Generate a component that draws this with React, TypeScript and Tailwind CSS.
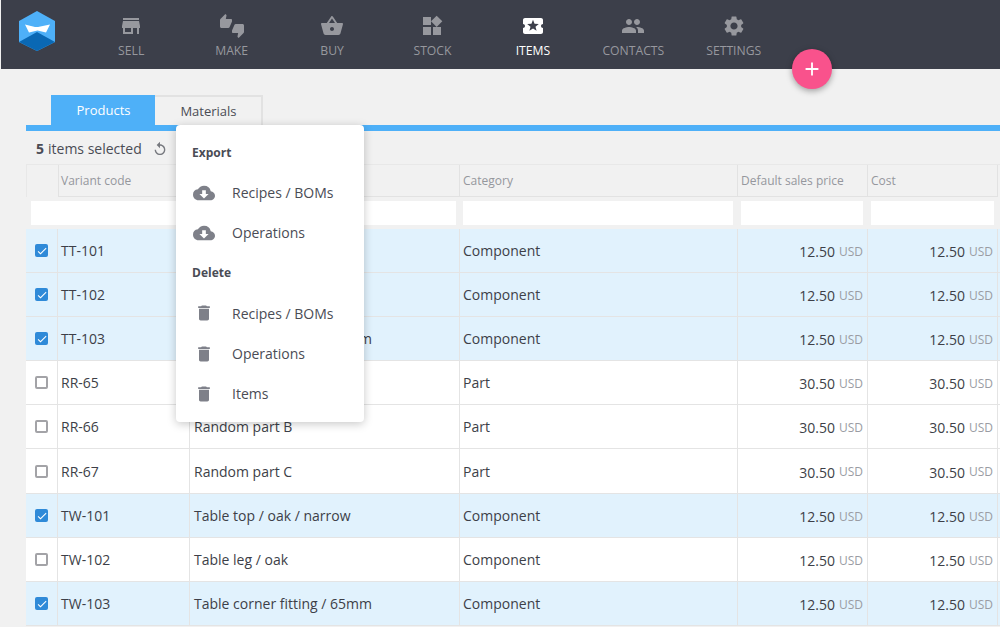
import {
  MdStore,
  MdThumbsUpDown,
  MdShoppingBasket,
  MdWidgets,
  MdLocalActivity,
  MdPeople,
  MdSettings,
  MdCloudDownload,
  MdDelete,
  MdReplay,
  MdCheck,
  MdAdd,
} from "react-icons/md";

const nav = [
  { label: "SELL", icon: MdStore },
  { label: "MAKE", icon: MdThumbsUpDown },
  { label: "BUY", icon: MdShoppingBasket },
  { label: "STOCK", icon: MdWidgets },
  { label: "ITEMS", icon: MdLocalActivity, active: true },
  { label: "CONTACTS", icon: MdPeople },
  { label: "SETTINGS", icon: MdSettings },
];

const rows = [
  { code: "TT-101", name: "Table top", category: "Component", price: "12.50", checked: true, h: "h-[44px]" },
  { code: "TT-102", name: "Table leg", category: "Component", price: "12.50", checked: true, h: "h-[44px]" },
  { code: "TT-103", name: "Table corner fitting / 65mm", category: "Component", price: "12.50", checked: true, h: "h-[44px]" },
  { code: "RR-65", name: "Random part A", category: "Part", price: "30.50", checked: false, h: "h-[44px]" },
  { code: "RR-66", name: "Random part B", category: "Part", price: "30.50", checked: false, h: "h-[44px]" },
  { code: "RR-67", name: "Random part C", category: "Part", price: "30.50", checked: false, h: "h-[45px]" },
  { code: "TW-101", name: "Table top / oak / narrow", category: "Component", price: "12.50", checked: true, h: "h-[44px]" },
  { code: "TW-102", name: "Table leg / oak", category: "Component", price: "12.50", checked: false, h: "h-[44px]" },
  { code: "TW-103", name: "Table corner fitting / 65mm", category: "Component", price: "12.50", checked: true, h: "h-[44px]" },
];

const gridCols = "grid grid-cols-[32px_132px_270px_278px_130px_132px]";

function Logo() {
  return (
    <svg width="38" height="42" viewBox="0 0 38 42" className="shrink-0">
      <polygon points="19,1 37,11 37,32 19,41 1,32 1,11" fill="#4eb0f8" />
      <polygon points="1,32 19,22 37,32 19,41" fill="#0a68b4" />
      <polygon points="7,14.5 17,17 20,17 32,14.5 28,22.6 19.5,20.5 11,22.6" fill="#ffffff" />
    </svg>
  );
}

function Checkbox({ checked }: { checked: boolean }) {
  if (checked) {
    return (
      <span className="flex h-[13px] w-[13px] items-center justify-center rounded-[2px] bg-[#2f8ad8] text-white">
        <MdCheck size={12} />
      </span>
    );
  }
  return <span className="block h-[13px] w-[13px] rounded-[2px] border-2 border-[#a3a3a7] bg-white" />;
}

function Money({ value }: { value: string }) {
  return (
    <div className="flex h-full items-center justify-end border-r border-[#e4e4e4] pr-[4px] pt-[2px] text-[14px]">
      {value}
      <span className="ml-[4px] text-[12px] text-[#9a9ca3]">USD</span>
    </div>
  );
}

function MenuItem({ icon: Icon, label, size }: { icon: typeof MdDelete; label: string; size: number }) {
  return (
    <div className="flex h-[40.3px] items-center text-[14px] text-[#4a4c55]">
      <span className="flex w-[40px] items-center">
        <span className="flex w-[24px] justify-center text-[#7e8089]">
          <Icon size={size} />
        </span>
      </span>
      {label}
    </div>
  );
}

export default function App() {
  return (
    <div className="relative h-[627px] w-[1000px] overflow-hidden bg-[#f1f1f1] pl-[1px] font-['Open_Sans',sans-serif] text-[#3d3f48]">
      <header className="flex h-[69px] bg-[#3c3f4a] pl-[17px] pr-[216px]">
        <div className="pt-[10px]">
          <Logo />
        </div>
        <nav className="ml-[25px] flex flex-1">
          {nav.map((item) => (
            <div
              key={item.label}
              className={`flex flex-1 flex-col items-center pt-[14px] ${item.active ? "text-white" : "text-[#97989e]"}`}
            >
              <item.icon size={24} />
              <span className="mt-[4px] text-[12.2px] leading-[17px]">{item.label}</span>
            </div>
          ))}
        </nav>
      </header>

      <button className="absolute left-[792px] top-[49px] flex h-[40px] w-[40px] items-center justify-center rounded-full bg-[#f9528c] text-white shadow-[0_2px_6px_rgba(0,0,0,0.35)]">
        <MdAdd size={22} />
      </button>

      <main className="pl-[25px]">
        <div className="flex h-[56px] items-end pl-[25px]">
          <div className="flex h-[30px] w-[104px] items-center justify-center bg-[#4eb0f8] pl-[1px] pt-[1px] text-[13px] font-medium text-white">
            Products
          </div>
          <div className="flex h-[30px] w-[108px] items-center justify-center border-2 border-b-0 border-l-0 border-[#e2e2e2] pl-[1px] pt-[1px] text-[13px] font-medium text-[#4a4c55]">
            Materials
          </div>
        </div>
        <div className="h-[6px] bg-[#4eb0f8]" />

        <div className="flex h-[33px] items-center pl-[10px] pt-[2px] text-[14px] text-[#4a4c55]">
          <span className="mr-[4px] font-bold">5</span> items selected
          <MdReplay size={16} className="ml-[10px] text-[#77797f]" />
        </div>

        <div className={`${gridCols} h-[33px] border-t border-[#e8e8e8] text-[12px] font-medium text-[#95979d]`}>
          <div className="border-l border-[#e8e8e8]" />
          <div className="flex items-center border-x border-b border-[#e2e2e2] pl-[2px]">Variant code</div>
          <div className="flex items-center border-r border-b border-[#e2e2e2] pl-[4px]">Name</div>
          <div className="flex items-center border-r border-b border-[#e2e2e2] pl-[3px]">Category</div>
          <div className="flex items-center border-r border-b border-[#e2e2e2] pl-[3px]">Default sales price</div>
          <div className="mr-[2px] flex items-center border-r border-b border-[#e2e2e2] pl-[3px]">Cost</div>
        </div>

        <div className={`${gridCols} h-[32px] items-center`}>
          <div />
          <div className="col-span-2 -ml-[27px] mr-[4px] h-[24px] bg-white" />
          <div className="ml-[3px] mr-[5px] h-[24px] bg-white" />
          <div className="ml-[3px] mr-[5px] h-[24px] bg-white" />
          <div className="ml-[3px] mr-[6px] h-[24px] bg-white" />
        </div>

        {rows.map((row) => (
          <div
            key={row.code}
            className={`${gridCols} ${row.h} items-center border-b border-[#e4e4e4] text-[14px] ${row.checked ? "bg-[#e1f2fd]" : "bg-white"}`}
          >
            <div className="flex h-full items-center justify-center border-r border-[#e4e4e4]">
              <Checkbox checked={row.checked} />
            </div>
            <div className="flex h-full items-center border-r border-[#e4e4e4] pl-[3px]">{row.code}</div>
            <div className="flex h-full items-center border-r border-[#e4e4e4] pl-[4px]">{row.name}</div>
            <div className="flex h-full items-center border-r border-[#e4e4e4] pl-[3px]">{row.category}</div>
            <Money value={row.price} />
            <div className="mr-[2px] h-full">
              <Money value={row.price} />
            </div>
          </div>
        ))}
      </main>

      <div className="absolute left-[176px] top-[125px] h-[297px] w-[188px] rounded-[4px] bg-white pl-[16px] pt-[20px] shadow-[0_2px_10px_rgba(0,0,0,0.22)]">
        <div className="mb-[11.5px] text-[12px] font-bold leading-[16px] text-[#4a4c55]">Export</div>
        <MenuItem icon={MdCloudDownload} label="Recipes / BOMs" size={22} />
        <MenuItem icon={MdCloudDownload} label="Operations" size={22} />
        <div className="mb-[12px] mt-[12px] text-[12px] font-bold leading-[16px] text-[#4a4c55]">Delete</div>
        <MenuItem icon={MdDelete} label="Recipes / BOMs" size={20} />
        <MenuItem icon={MdDelete} label="Operations" size={20} />
        <MenuItem icon={MdDelete} label="Items" size={20} />
      </div>
    </div>
  );
}
